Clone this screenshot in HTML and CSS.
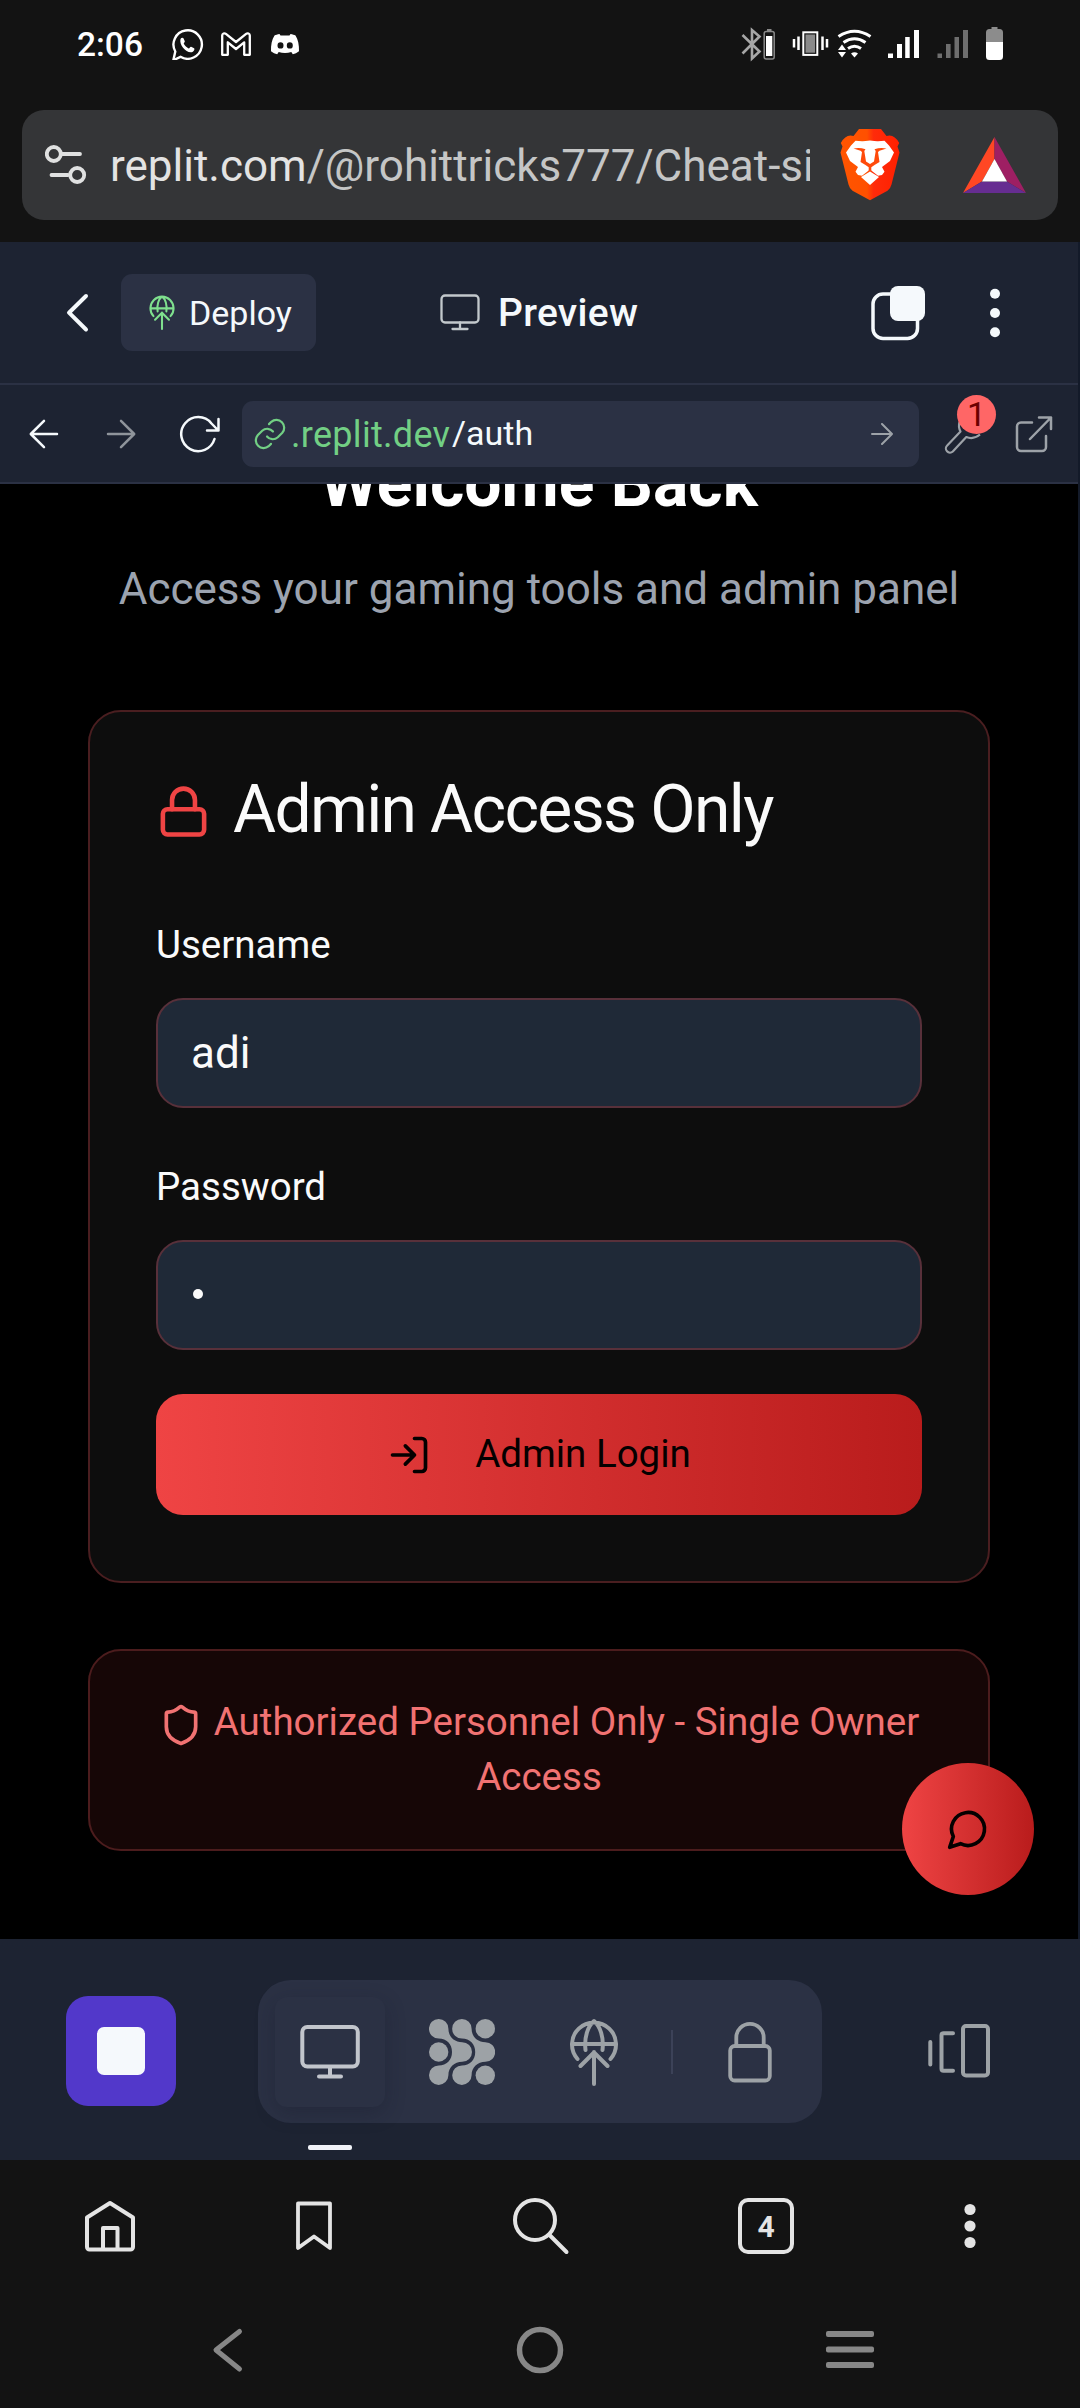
FILE: index.html
```html
<!DOCTYPE html>
<html lang="en">
<head>
<meta charset="utf-8">
<title>Preview</title>
<link rel="stylesheet" href="styles.css">
</head>
<body>
<div class="phone">

  <header class="status">
    <span class="clock">2:06</span>
    <svg class="st-whatsapp" width="32" height="32" viewBox="172 28 32 32" fill="none" stroke="#fff" stroke-width="2.4">
      <path d="M173.300 60.300 L175.300 51.500 A14.200 14.200 0 1 1 180.500 56.800 Z" stroke-linejoin="round"/>
      <path d="M180.500 39c.8-1.300 2.500-1.600 3.100-.4l1.200 2.700c.3.800-1.300 1.900-1 2.500 1.200 2.300 2.800 3.700 4.900 4.600.8.200 1.500-2 2.400-1.700l3 1.500c1 .8-.3 3.200-1.700 3.800-5.500 1.900-13.500-6.500-11.900-13z" fill="#fff" stroke="none"/>
    </svg>
    <svg class="st-gmail" width="32" height="32" viewBox="220 28 32 32" fill="none" stroke="#fff" stroke-width="2.300" stroke-linejoin="round">
      <path d="M222.200 54.800V35.500c0-2 2.200-2.800 3.700-1.600L236 42l10.100-8.100c1.500-1.200 3.700-.4 3.700 1.600v19.300h-5.600V42.300L236 49l-8.200-6.700v12.500z"/>
    </svg>
    <svg class="st-discord" width="32" height="32" viewBox="269 28 32 32">
      <path fill="#fff" fill-rule="evenodd" d="M279.500 34c-2 .3-3.800.9-5 1.500-2.600 4-3.700 9.500-3.500 15.800 2 1.700 4 2.500 6.200 3l1.500-2.300c4 1.200 8.600 1.200 12.600 0l1.500 2.300c2.200-.5 4.200-1.300 6.200-3 .2-6.300-.9-11.800-3.500-15.800-1.200-.6-3-1.200-5-1.500l-1 1.600h-9zm1 8.200a3 3.200 0 1 0 0 6.400 3 3.200 0 1 0 0-6.400zm9.300 0a3 3.200 0 1 0 0 6.400 3 3.200 0 1 0 0-6.400z"/>
    </svg>
    <svg class="st-system" width="264" height="36" viewBox="741 26 264 36">
      <path d="M742.500 35l17 16.500-7.500 7V30l7.500 6.500-17 17" fill="none" stroke="#a6a6a6" stroke-width="2.600"/>
      <rect x="764.200" y="31.500" width="10" height="27.500" rx="2" fill="none" stroke="#8a8a8a" stroke-width="1.500"/>
      <rect x="767" y="29" width="4.500" height="2" fill="#8a8a8a"/>
      <rect x="766" y="36" width="6.300" height="20" fill="#fff"/>
      <rect x="803.300" y="32.300" width="14" height="22.600" fill="none" stroke="#fff" stroke-width="2"/>
      <rect x="805.500" y="34.500" width="9.600" height="18.200" fill="#8a8a8a"/>
      <path d="M794 39v8.500M798.500 36.500v13.500M822.500 36.500v13.500M827 39v8.500" stroke="#fff" stroke-width="2.500"/>
      <g fill="none" stroke="#fff" stroke-width="3">
        <path d="M838.500 36.500q16-10.500 32 0M843.500 42.500q11-7.500 22 0M848 48.500q6.500-4.500 13 0"/>
      </g>
      <path d="M851 53.500q3.500-2.500 7 0l-3.500 4z" fill="#fff"/>
      <path d="M838 50l4-5.500 4 5.500zM838 52h8l-4 5.500z" fill="#fff"/>
      <path d="M888 53.500h5V58h-5zM897 44h5v14h-5zM905.200 37h4.500v21h-4.500zM914 30h5v28h-5z" fill="#fff"/>
      <path d="M937.500 53.500h4.500V58h-4.500zM946 44h4.600v14H946zM954.500 37h4.500v21h-4.500zM963 30h5v28h-5z" fill="#6e6e6e"/>
      <path d="M986 42v-9.500a3.500 3.500 0 0 1 3.500-3.500h2v-2h6v2h2a3.500 3.500 0 0 1 3.500 3.500V42z" fill="#8c8c8c"/>
      <path d="M986 42h17v14.500a3.500 3.500 0 0 1-3.500 3.500h-10a3.500 3.500 0 0 1-3.500-3.500z" fill="#fff"/>
    </svg>
  </header>

  <div class="omnibox">
    <svg class="tune" width="42" height="42" viewBox="45 144 42 42" fill="none" stroke="#e0e1e1" stroke-width="3.800" stroke-linecap="round">
      <circle cx="53.800" cy="154" r="7"/><path d="M62 154h18M51.500 175H68"/><circle cx="77.200" cy="175" r="7"/>
    </svg>
    <div class="address"><span class="host">replit.com</span>/@rohittricks777/Cheat-site</div>
    <svg class="brave" width="60" height="72" viewBox="-30 130 60 72">
      <defs><linearGradient id="lion" x1="0" x2="1"><stop offset="0" stop-color="#ff5500"/><stop offset=".45" stop-color="#ff5000"/><stop offset=".56" stop-color="#ff2b0a"/><stop offset="1" stop-color="#ff2000"/></linearGradient></defs>
      <path fill="url(#lion)" d="M-11 130H11l5.500 7q7.500-2.500 12.700 7l-1.700 3.500 2 6-8 32q-1 4-4 6.300L0 201.200l-17.500-9.400q-3-2.300-4-6.300l-8-32 2-6-1.700-3.500q5.200-9.500 12.700-7z"/>
      <path fill="#fff" d="M0 141.500q6 1 8 .8l6.500-.6 4.500 4.800 5 7-4 8.500-8 6 2.500 4.800-2.500 3.200-4 .8L0 170.500l-8 6.300-4-.8-2.500-3.200 2.500-4.800-8-6-4-8.500 5-7 4.500-4.800 6.500.6q2 .2 8-.8z"/>
      <path fill="#ff4a0a" d="M-16.500 149.500q6-1.500 12 .8l-1.200 1.700 1.700 10.500L0 165l4-2.500 1.700-10.500-1.200-1.700q6-2.300 12-.8l-7 2.300-1.500 1.200 1.500 10L4.500 166l-3.200 2.300v4.200h-2.600v-4.200L-4.500 166l-5-3 1.500-10-1.500-1.200z"/>
      <path fill="#fff" d="M0 172.500l9 5.500-9 8-9-8z"/>
    </svg>
    <svg class="bat" width="64" height="58" viewBox="962 136 64 58">
      <path fill="#ff4724" d="M994.500 137v22L982 181.500l-19 11.500z"/><path fill="#9e1f63" d="M994.500 137v22l12.500 22.500 19 11.500z"/><path fill="#662d91" d="M963 193l19-11.500h25l19 11.500z"/><path fill="#fff" d="M994.500 159l12.500 22.500h-25z"/>
    </svg>
  </div>

  <main class="app">
    <nav class="topbar">
      <svg class="back" width="24" height="40" viewBox="66 293 24 40" fill="none" stroke="#f5f9fc" stroke-width="4" stroke-linecap="round" stroke-linejoin="round"><path d="M86 296l-17 16.700L86 329.500"/></svg>
      <div class="deploy">
        <svg width="26" height="35" viewBox="-25 -1 50 68" fill="none" stroke="#7fe08e" stroke-width="4" stroke-linecap="round" stroke-linejoin="round">
          <path d="M-16.500 40A22.500 22.500 0 1 1 16.500 40M-22 25H22M-8.500 31C-10 18-6 7 0 2 6 7 10 18 8.500 31M0 65V33M-13.500 47L0 33.500 13.500 47"/>
        </svg>
        <span>Deploy</span>
      </div>
      <svg class="mon" width="40" height="37" viewBox="0 0 40 37" fill="none" stroke="#c2c8cc" stroke-width="2.300" stroke-linecap="round"><rect x="1.500" y="1.500" width="37" height="27" rx="3.500"/><path d="M20 28.500V35M12.500 35h15"/></svg>
      <h1>Preview</h1>
      <svg class="panes" width="56" height="56" viewBox="871 284 56 56"><rect x="874" y="293" width="44.500" height="44.500" rx="10" fill="none" stroke="#f5f9fc" stroke-width="3.500"/><rect x="891" y="285" width="35" height="35" rx="8" fill="#f5f9fc"/></svg>
      <svg class="more" width="12" height="50" viewBox="0 0 12 50" fill="#f5f9fc"><circle cx="6" cy="5.700" r="5"/><circle cx="6" cy="25" r="5"/><circle cx="6" cy="44.300" r="5"/></svg>
    </nav>

    <div class="toolbar">
      <svg class="t-back" width="30" height="30" viewBox="0 0 30 30" fill="none" stroke="#f5f9fc" stroke-width="2.500" stroke-linecap="round" stroke-linejoin="round"><path d="M28 15H2M15 1.800L1.800 15 15 28.200"/></svg>
      <svg class="t-fwd" width="30" height="30" viewBox="0 0 30 30" fill="none" stroke="#8f949b" stroke-width="2.500" stroke-linecap="round" stroke-linejoin="round"><path d="M2 15h26M15 1.800L28.200 15 15 28.200"/></svg>
      <svg class="t-reload" width="42" height="38" viewBox="179 415 42 38" fill="none" stroke="#f5f9fc" stroke-width="2.500" stroke-linecap="round" stroke-linejoin="round"><path d="M214.500 439a17 17 0 1 1-3-15.500l6.800 7M218.500 419v11.500H207"/></svg>
      <div class="weburl">
        <svg width="32" height="32" viewBox="254 418 32 32" fill="none" stroke="#72cf84" stroke-width="2.200" stroke-linecap="round"><path d="M267 436.500a7.500 7.500 0 0 0 10.800.8l4.500-4.500a7.800 7.800 0 0 0-11-11l-2.300 2.300M273 431.500a7.500 7.500 0 0 0-10.800-.8l-4.500 4.500a7.800 7.800 0 0 0 11 11l2.300-2.300"/></svg>
        <span class="dom">.replit.dev</span><span class="path">/auth</span>
        <svg class="go" width="22" height="22" viewBox="0 0 22 22" fill="none" stroke="#9da2a8" stroke-width="2" stroke-linecap="round" stroke-linejoin="round"><path d="M1 11h20M11 1l10 10-10 10"/></svg>
      </div>
      <div class="tools">
        <svg width="52" height="52" viewBox="944 402 52 52" fill="none" stroke="#9da2a8" stroke-width="2.200" stroke-linejoin="round"><path d="M959.500 422q-1.500 5 1 9.500l-13.300 14a4 4 0 0 0 5.600 6l13.500-14.500q7 3 13.700-2.500"/></svg>
        <span class="badge">1</span>
      </div>
      <svg class="t-ext" width="38" height="38" viewBox="1015 415 38 38" fill="none" stroke="#9da2a8" stroke-width="2.500" stroke-linecap="round" stroke-linejoin="round"><path d="M1032 422.500h-11a4 4 0 0 0-4 4V447a4 4 0 0 0 4 4h21a4 4 0 0 0 4-4v-11M1039 417.500h12V429M1051 417.500l-21 21.500"/></svg>
    </div>

    <section class="page">
      <h2>Welcome Back</h2>
      <p class="sub">Access your gaming tools and admin panel</p>
      <div class="card">
        <div class="card-title">
          <svg width="55" height="55" viewBox="0 0 24 24" fill="none" stroke="#ef4444" stroke-width="2" stroke-linecap="round" stroke-linejoin="round"><rect x="3" y="11" width="18" height="11" rx="2"/><path d="M7 11V7a5 5 0 0 1 10 0v4"/></svg>
          <h3>Admin Access Only</h3>
        </div>
        <label>Username</label>
        <div class="field">adi</div>
        <label class="pw">Password</label>
        <div class="field"><i class="dot"></i></div>
        <div class="login">
          <svg width="44" height="44" viewBox="0 0 24 24" fill="none" stroke="#050000" stroke-width="2" stroke-linecap="round" stroke-linejoin="round"><path d="M15 3h4a2 2 0 0 1 2 2v14a2 2 0 0 1-2 2h-4M10 17l5-5-5-5M15 12H3"/></svg>
          <span>Admin Login</span>
        </div>
      </div>
      <div class="notice">
        <svg width="44" height="44" viewBox="0 0 24 24" fill="none" stroke="#f17272" stroke-width="2" stroke-linecap="round" stroke-linejoin="round"><path d="M20 13c0 5-3.500 7.500-7.660 8.950a1 1 0 0 1-.67-.01C7.500 20.500 4 18 4 13V6a1 1 0 0 1 1-1c2 0 4.500-1.200 6.240-2.720a1.170 1.170 0 0 1 1.520 0C14.510 3.810 17 5 19 5a1 1 0 0 1 1 1z"/></svg><span>Authorized Personnel Only - Single Owner</span><br><span>Access</span>
      </div>
      <div class="chat">
        <svg width="44" height="44" viewBox="0 0 24 24" fill="none" stroke="#050000" stroke-width="2" stroke-linecap="round" stroke-linejoin="round"><path d="M7.900 20A9 9 0 1 0 4 16.100L2 22Z"/></svg>
      </div>
    </section>
  </main>

  <div class="dock">
    <div class="run"><i></i></div>
    <div class="tabs">
      <div class="tab active">
        <svg width="60" height="56" viewBox="300 2023 60 56" fill="none" stroke="#c2c5cc" stroke-width="4" stroke-linecap="round"><rect x="302.300" y="2026" width="55.500" height="39.500" rx="5"/><path d="M330 2066v9.500M319 2075.500h22"/></svg>
      </div>
      <svg class="agents" width="66" height="66" viewBox="429 2018 66 66" fill="#9da2a6">
        <path id="chev" d="M438.700 2018a9.700 9.700 0 0 1 9.700 9.700c0 8 6 13.500 13.800 13.500a9.800 9.800 0 0 1 0 19.600c-7.800 0-13.800 5.500-13.800 13.500a9.700 9.700 0 1 1-9.700-9.800c8 0 13.300-5.500 13.300-13.500s-5.300-13.500-13.300-13.500a9.700 9.700 0 0 1 0-19.500z"/>
        <use href="#chev" x="23.200"/>
        <circle cx="438.700" cy="2051" r="9.700"/><circle cx="485.300" cy="2027.700" r="9.700"/><circle cx="485.300" cy="2074.300" r="9.700"/>
      </svg>
      <svg class="globe" width="50" height="68" viewBox="-25 -1 50 68" fill="none" stroke="#9da2a6" stroke-width="4" stroke-linecap="round" stroke-linejoin="round">
        <path d="M-16.500 40A22 22 0 1 1 16.500 40M-22 25H22M-8.500 31C-10 18-6 7 0 2 6 7 10 18 8.500 31M0 65V33M-13.500 47L0 33.500 13.500 47"/>
      </svg>
      <i class="sep"></i>
      <svg class="auth" width="44" height="62" viewBox="0 0 44 62" fill="none" stroke="#9da2a6" stroke-width="3.800"><rect x="2.200" y="25" width="39.600" height="34.500" rx="4.500"/><path d="M8.300 25V16.500a13.700 13.700 0 0 1 27.400 0V25"/></svg>
    </div>
    <svg class="switch" width="64" height="56" viewBox="927 2023 64 56" fill="none" stroke="#9da2a6" stroke-width="4" stroke-linecap="round" stroke-linejoin="round"><rect x="963" y="2026" width="25" height="49.500" rx="3"/><path d="M953 2033.300h-9.500a2 2 0 0 0-2 2v33.500a2 2 0 0 0 2 2h9.500M930.300 2042v22.500"/></svg>
  </div>
  <div class="mark"><i></i></div>

  <nav class="browser">
    <svg width="54" height="54" viewBox="83 2199 54 54" fill="none" stroke="#e4e4e4" stroke-width="4" stroke-linejoin="round"><path d="M87 2217.500L110 2203l23 14.500V2247a2.500 2.500 0 0 1-2.500 2.500h-41A2.500 2.500 0 0 1 87 2247zM103 2249v-21h14.500v21"/></svg>
    <svg class="bookmark" width="38" height="54" viewBox="295 2199 38 54" fill="none" stroke="#e4e4e4" stroke-width="3.800" stroke-linejoin="round"><path d="M298 2203.500h32V2248l-16-11.500-16 11.500z"/></svg>
    <svg class="search" width="58" height="60" viewBox="512 2197 58 60" fill="none" stroke="#e4e4e4" stroke-width="4" stroke-linecap="round"><circle cx="535" cy="2221" r="20"/><path d="M550 2236.500l16.500 16.500"/></svg>
    <div class="count">4</div>
    <svg class="menu" width="12" height="46" viewBox="0 0 12 46" fill="#e4e4e4"><circle cx="6" cy="6.500" r="5.600"/><circle cx="6" cy="23" r="5.600"/><circle cx="6" cy="39.500" r="5.600"/></svg>
  </nav>

  <nav class="system">
    <svg width="32" height="48" viewBox="212 2326 32 48" fill="none" stroke="#878787" stroke-width="5" stroke-linecap="round" stroke-linejoin="round"><path d="M239.500 2331.500L216 2350l23.500 19"/></svg>
    <svg class="home" width="48" height="48" viewBox="0 0 48 48" fill="none" stroke="#878787" stroke-width="5.500"><circle cx="24" cy="24" r="20.500"/></svg>
    <svg class="recents" width="50" height="38" viewBox="0 0 50 38" fill="#878787"><rect x="1" y="0" width="48" height="6" rx="2"/><rect x="1" y="15.500" width="48" height="6" rx="2"/><rect x="1" y="31" width="48" height="6" rx="2"/></svg>
  </nav>
</div>
</body>
</html>
```

FILE: styles.css
```css
* { box-sizing: border-box; margin: 0; padding: 0; }
body { background: #131313; font-family: Roboto, "Liberation Sans", sans-serif; color: #fff; }
svg { display: block; flex: none; }
h1, h2, h3 { font-weight: 500; }
.phone { width: 1080px; height: 2408px; overflow: hidden; background: #131313; }

/* Android status bar */
.status { height: 88px; display: flex; align-items: center; padding: 0 75px 0 77px; white-space: nowrap; }
.clock { width: 95px; font-size: 33.5px; font-weight: 500; line-height: 40px; padding-top: 2px; }
.st-gmail { margin-left: 16px; }
.st-discord { margin-left: 17px; }
.st-system { margin-left: auto; }

/* Browser address bar */
.omnibox { margin: 22px 22px 22px; height: 110px; border-radius: 22px; background: #343537; display: flex; align-items: center; padding: 0 32px 0 23px; }
.address { width: 700px; margin-left: 23px; overflow: hidden; white-space: nowrap; font-size: 44px; line-height: 60px; color: #c5c6c6; padding-top: 2px; }
.host { color: #e3e3e3; }
.brave { margin-left: 30px; }
.bat { margin-left: auto; }

/* Workspace */
.app { height: 1697px; border-right: 2px solid #131a29; background: #1d2332; overflow: hidden; }
.topbar { height: 143px; display: flex; align-items: center; border-bottom: 2px solid #2b3144; padding-left: 66px; }
.deploy { width: 195px; height: 77px; margin-left: 31px; padding-left: 28px; border-radius: 11px; background: #2b3144; display: flex; align-items: center; gap: 14px; font-size: 34px; color: #f5f9fc; }
.mon { margin-left: 124px; }
.topbar h1 { width: 150px; margin-left: 18px; font-size: 39px; letter-spacing: .3px; line-height: 50px; color: #f5f9fc; white-space: nowrap; }
.panes { margin-left: 222px; }
.more { margin-left: 63px; }
.toolbar { height: 99px; display: flex; align-items: center; border-bottom: 2px solid #2b3144; padding-left: 29px; }
.t-fwd { margin-left: 47px; }
.t-reload { margin-left: 43px; }
.weburl { width: 677px; height: 66px; margin-left: 21px; padding: 0 26px 0 12px; border-radius: 11px; background: #2b3144; display: flex; align-items: center; font-size: 35px; line-height: 44px; white-space: nowrap; }
.dom { width: 161px; margin-left: 5px; padding-top: 3px; color: #72cf84; font-size: 36px; letter-spacing: .3px; }
.path { color: #f5f9fc; padding-bottom: 2px; font-size: 34px; }
.go { margin-left: auto; }
.tools { position: relative; margin-left: 25px; width: 52px; height: 52px; margin-top: -12px; }
.badge { position: absolute; left: 13px; top: -7px; width: 39px; height: 39px; border-radius: 50%; background: #ff6666; color: #6b0000; font-size: 34px; line-height: 39px; text-align: center; }
.t-ext { margin-left: 19px; }

/* Login page */
.page { position: relative; height: 1455px; padding: 0 88px; background: #000; overflow: hidden; text-align: center; }
.page h2 { margin-top: -44px; font-size: 66px; font-weight: 700; line-height: 88px; }
.sub { margin-top: 28px; font-size: 44px; line-height: 66px; color: #9ca3af; white-space: nowrap; }
.card { margin-top: 88px; height: 873px; padding: 65px 66px 0; border: 2px solid #4a1e20; border-radius: 33px; background: #0d0d0d; text-align: left; color: #fafafa; }
.card-title { height: 66px; display: flex; align-items: center; gap: 22px; margin-bottom: 82px; }
.card-title svg { margin-top: 3px; }
.card-title h3 { font-size: 66px; font-weight: 400; letter-spacing: -1.65px; line-height: 66px; white-space: nowrap; }
label { display: block; font-size: 38.5px; line-height: 39px; }
.pw { margin-top: 59px; }
.field { margin-top: 34px; height: 110px; padding: 0 33px; border: 2px solid #58303a; border-radius: 27px; background: #1f2937; display: flex; align-items: center; font-size: 44px; }
.dot { width: 10px; height: 10px; border-radius: 50%; background: #fafafa; margin: -2px 0 0 2px; }
.login { margin-top: 44px; height: 121px; border-radius: 27px; background: linear-gradient(90deg, #ef4444, #b91c1c); display: flex; align-items: center; justify-content: center; gap: 44px; color: #050000; font-size: 38.5px; }
.login span { padding-bottom: 2px; }
.notice { margin-top: 66px; height: 202px; padding: 43px 44px 0; border: 2px solid #4c1c1d; border-radius: 33px; background: #160606; color: #f17272; font-size: 38.5px; line-height: 55px; white-space: nowrap; }
.notice svg { display: inline-block; vertical-align: -12px; margin-right: 11px; }
.chat { position: absolute; left: 902px; top: 1279px; width: 132px; height: 132px; border-radius: 50%; background: linear-gradient(90deg, #ef4444, #b91c1c); display: flex; align-items: center; justify-content: center; }

/* Workspace dock */
.dock { height: 206px; padding: 41px 89px 0 66px; background: #1d2332; display: flex; align-items: flex-start; }
.run { width: 110px; height: 110px; margin-top: 16px; border-radius: 22px; background: #5238ca; display: flex; align-items: center; justify-content: center; }
.run i { width: 48px; height: 48px; border-radius: 7px; background: #f5f9fc; }
.tabs { width: 564px; height: 143px; margin-left: 82px; padding-left: 17px; border-radius: 33px; background: #2b3144; display: flex; align-items: center; }
.tab { width: 110px; height: 110px; border-radius: 12px; background: #2b3144; display: flex; align-items: center; justify-content: center; box-shadow: 0 6px 20px rgba(20, 24, 40, .3); }
.agents { margin-left: 44px; }
.globe { margin-left: 74px; }
.sep { width: 2px; height: 44px; margin-left: 52px; background: #3c4258; }
.auth { margin-left: 55px; }
.switch { margin: 43px 0 0 auto; }
.mark { height: 15px; padding-left: 308px; background: #1d2332; }
.mark i { display: block; width: 44px; height: 5px; border-radius: 2px; background: #f0f2f8; }

/* Browser bottom bar */
.browser { height: 132px; display: flex; align-items: center; padding-left: 83px; }
.bookmark { margin-left: 158px; }
.search { margin-left: 179px; }
.count { margin-left: 168px; width: 56px; height: 56px; border: 4px solid #e4e4e4; border-radius: 10px; font-size: 30px; font-weight: 700; line-height: 49px; text-align: center; color: #e4e4e4; }
.menu { margin-left: 170px; }

/* Android navigation */
.system { height: 116px; display: flex; align-items: center; padding-left: 212px; }
.home { margin-left: 272px; }
.recents { margin-left: 261px; }
```
